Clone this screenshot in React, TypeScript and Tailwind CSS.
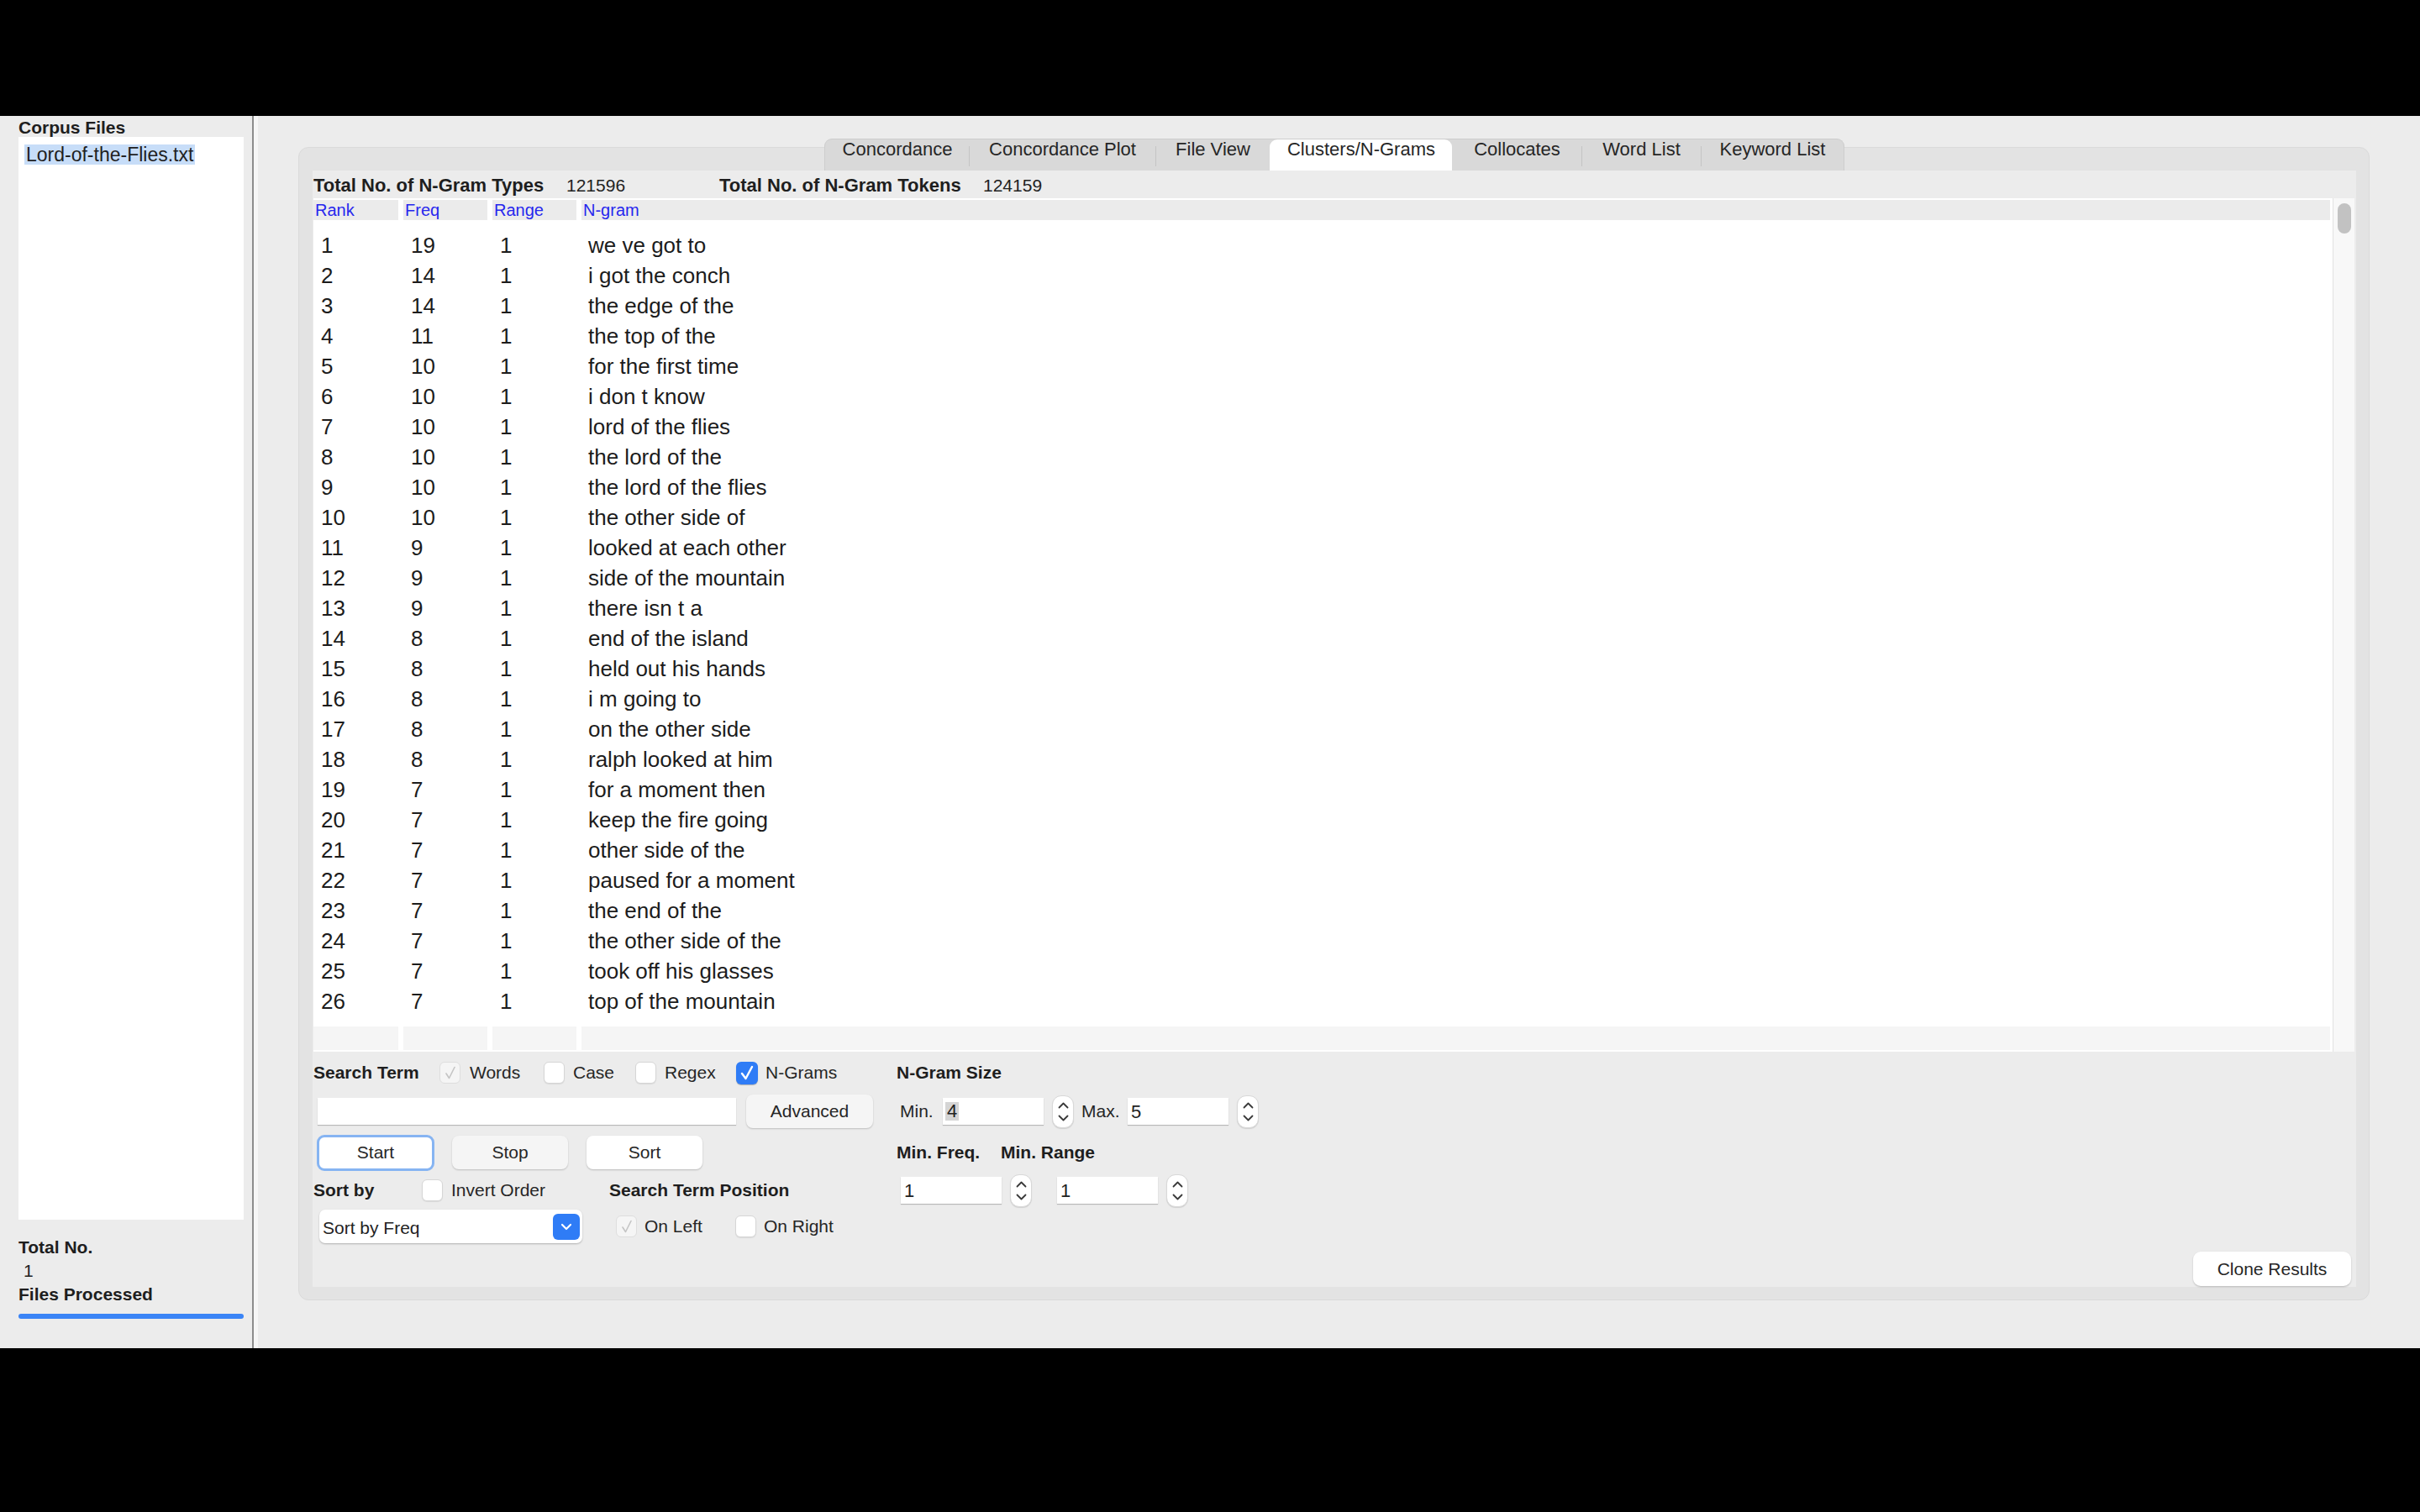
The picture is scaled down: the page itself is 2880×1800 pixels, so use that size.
import React from "react";

const rows: [number, number, number, string][] = [
  [1, 19, 1, "we ve got to"],
  [2, 14, 1, "i got the conch"],
  [3, 14, 1, "the edge of the"],
  [4, 11, 1, "the top of the"],
  [5, 10, 1, "for the first time"],
  [6, 10, 1, "i don t know"],
  [7, 10, 1, "lord of the flies"],
  [8, 10, 1, "the lord of the"],
  [9, 10, 1, "the lord of the flies"],
  [10, 10, 1, "the other side of"],
  [11, 9, 1, "looked at each other"],
  [12, 9, 1, "side of the mountain"],
  [13, 9, 1, "there isn t a"],
  [14, 8, 1, "end of the island"],
  [15, 8, 1, "held out his hands"],
  [16, 8, 1, "i m going to"],
  [17, 8, 1, "on the other side"],
  [18, 8, 1, "ralph looked at him"],
  [19, 7, 1, "for a moment then"],
  [20, 7, 1, "keep the fire going"],
  [21, 7, 1, "other side of the"],
  [22, 7, 1, "paused for a moment"],
  [23, 7, 1, "the end of the"],
  [24, 7, 1, "the other side of the"],
  [25, 7, 1, "took off his glasses"],
  [26, 7, 1, "top of the mountain"],
];

const tabs: [string, number][] = [
  ["Concordance", 171],
  ["Concordance Plot", 222],
  ["File View", 136],
  ["Clusters/N-Grams", 217],
  ["Collocates", 154],
  ["Word List", 142],
  ["Keyword List", 170],
];
const selectedTab = 3;

function Check({ state }: { state: "off" | "on" | "dim" }) {
  if (state === "on") {
    return (
      <span className="w-[26px] h-[27px] shrink-0 rounded-[6px] bg-[#2f7cf6] flex items-center justify-center shadow-[0_1px_1px_rgba(0,0,0,0.25)]">
        <svg width="18" height="20" viewBox="0 0 18 20">
          <path d="M3 11 L7.5 17 L15 3" fill="none" stroke="#fff" strokeWidth="2.4" strokeLinecap="round" strokeLinejoin="round" />
        </svg>
      </span>
    );
  }
  if (state === "dim") {
    return (
      <span className="w-[25px] h-[26px] shrink-0 rounded-[6px] bg-[#f5f5f5] border border-[#dedede] flex items-center justify-center">
        <svg width="16" height="18" viewBox="0 0 16 18">
          <path d="M3 10 L6.5 15.5 L13 2.5" fill="none" stroke="#c4c4c4" strokeWidth="1.6" strokeLinecap="round" strokeLinejoin="round" />
        </svg>
      </span>
    );
  }
  return <span className="w-[25px] h-[26px] shrink-0 rounded-[6px] bg-white border border-[#d6d6d6] shadow-[0_1px_1px_rgba(0,0,0,0.08)]" />;
}

function Spinner() {
  return (
    <span className="w-[26px] h-[39px] shrink-0 rounded-[11px] bg-white border border-[#d8d8d8] shadow-[0_1px_1px_rgba(0,0,0,0.12)] flex flex-col items-center justify-center gap-[7px]">
      <svg width="13" height="8" viewBox="0 0 13 8">
        <path d="M1.5 6.5 L6.5 1.5 L11.5 6.5" fill="none" stroke="#3a3a3a" strokeWidth="1.8" strokeLinecap="round" strokeLinejoin="round" />
      </svg>
      <svg width="13" height="8" viewBox="0 0 13 8">
        <path d="M1.5 1.5 L6.5 6.5 L11.5 1.5" fill="none" stroke="#3a3a3a" strokeWidth="1.8" strokeLinecap="round" strokeLinejoin="round" />
      </svg>
    </span>
  );
}

function NumField({ value, selected, className }: { value: string; selected?: boolean; className?: string }) {
  return (
    <span className={"w-[120px] h-[32px] shrink-0 bg-white shadow-[0_1px_1px_rgba(0,0,0,0.22)] flex items-center text-[22px] text-[#222] " + (className ?? "")}>
      {selected ? (
        <span className="ml-[3px] bg-[#d5d5d5] px-[2px] leading-[22px]">{value}</span>
      ) : (
        <span className="ml-[4px]">{value}</span>
      )}
    </span>
  );
}

export default function App() {
  return (
    <div className="w-[2880px] h-[1800px] bg-black flex flex-col font-['Liberation_Sans',Arial,sans-serif] text-[#222] overflow-hidden">
      <div className="h-[138px] shrink-0" />
      <div className="h-[1467px] shrink-0 flex bg-[#ececec]">
        {/* left: corpus files */}
        <aside className="w-[300px] shrink-0 flex flex-col pl-[22px] pr-[10px]">
          <div className="pt-[3px] leading-[22px] text-[21px] font-bold text-[#1e1e1e]">Corpus Files</div>
          <div className="h-[1289px] bg-white pt-[9px] pl-[7px]">
            <span className="inline-block bg-[#c7ddf8] h-[24px] leading-[24px] px-[2px] text-[23px] text-[#1f1f1f]">
              Lord-of-the-Flies.txt
            </span>
          </div>
          <div className="mt-[19px] leading-[28px] text-[21px] font-bold text-[#1e1e1e]">Total No.</div>
          <div className="leading-[28px] text-[21px] pl-[6px]">1</div>
          <div className="leading-[28px] text-[21px] font-bold text-[#1e1e1e]">Files Processed</div>
          <div className="mt-[9px] h-[6px] rounded-full bg-[#3a84f6]" />
        </aside>
        <div className="w-[2px] shrink-0 bg-[#8d8d8d]" />
        <div className="w-[5px] shrink-0 bg-[#f6f6f6]" />

        {/* main */}
        <main className="flex-1 pl-[48px] pr-[60px] pt-[37px] pb-[57px] flex flex-col">
          <section className="flex-1 bg-[#e3e3e3] border border-[#dadada] rounded-[12px] px-[16px] pr-[15px] pb-[15px] flex flex-col">
            <div className="-mt-[11px] h-[38px] shrink-0 flex justify-center">
              <div className="flex h-[38px] rounded-t-[9px] bg-[#d9d9d9] border border-b-0 border-[#cdcdcd] overflow-hidden">
                {tabs.map(([label, w], i) => {
                  const sel = i === selectedTab;
                  const sep = i > 0 && !sel && i - 1 !== selectedTab;
                  return (
                    <div key={label} className={"flex h-full " + (sel ? "bg-white rounded-t-[9px]" : "")} style={{ width: w }}>
                      <span className={"w-px h-[24px] mt-[8px] shrink-0 " + (sep ? "bg-[#c4c4c4]" : "bg-transparent")} />
                      <span className="flex-1 text-center text-[22px] leading-[24px] text-[#262626]">{label}</span>
                    </div>
                  );
                })}
              </div>
            </div>

            <div className="flex-1 bg-[#ececec] flex flex-col pl-px pr-[2px]">
              {/* stats */}
              <div className="h-[33px] shrink-0 pt-[7px] flex items-start text-[22px] leading-[22px]">
                <span className="w-[301px] font-bold text-[#1e1e1e]">Total No. of N-Gram Types</span>
                <span className="w-[182px] text-[21px]">121596</span>
                <span className="w-[314px] font-bold text-[#1e1e1e]">Total No. of N-Gram Tokens</span>
                <span className="text-[21px]">124159</span>
              </div>

              {/* table */}
              <div className="h-[1016px] shrink-0 flex">
                <div className="flex-1 bg-white py-[2px] flex flex-col">
                  <div className="h-[24px] shrink-0 flex gap-[6px] pr-[3px] text-[20px] leading-[24px] text-[#2727ee]">
                    <span className="w-[101px] bg-[#ebebeb] pl-[2px]">Rank</span>
                    <span className="w-[100px] bg-[#ebebeb] pl-[2px]">Freq</span>
                    <span className="w-[100px] bg-[#ebebeb] pl-[2px]">Range</span>
                    <span className="flex-1 bg-[#ebebeb] pl-[2px]">N-gram</span>
                  </div>
                  <div className="h-[960px] shrink-0 overflow-hidden pt-[12px] text-[26px] text-[#1c1c1c]">
                    {rows.map(([rank, freq, range, gram]) => (
                      <div key={rank} className="h-[36px] flex items-center">
                        <span className="w-[107px] pl-[9px]">{rank}</span>
                        <span className="w-[106px] pl-[9px]">{freq}</span>
                        <span className="w-[106px] pl-[9px]">{range}</span>
                        <span className="flex-1 pl-[8px]">{gram}</span>
                      </div>
                    ))}
                  </div>
                  <div className="h-[28px] shrink-0 flex gap-[6px] pr-[3px]">
                    <span className="w-[101px] bg-[#f5f5f5]" />
                    <span className="w-[100px] bg-[#f5f5f5]" />
                    <span className="w-[100px] bg-[#f5f5f5]" />
                    <span className="flex-1 bg-[#f5f5f5]" />
                  </div>
                </div>
                <div className="w-[26px] shrink-0 bg-[#f8f8f8] border-l border-[#e2e2e2] pt-[6px] flex justify-center">
                  <span className="w-[16px] h-[36px] rounded-full bg-[#c2c2c2]" />
                </div>
              </div>

              {/* controls */}
              <div className="flex-1 flex text-[21px] text-[#262626]">
                <div className="w-[694px] shrink-0 flex flex-col pt-[11px]">
                  <div className="h-[28px] flex items-center">
                    <span className="w-[150px] font-bold text-[#1e1e1e]">Search Term</span>
                    <span className="w-[124px] flex items-center"><Check state="dim" /><span className="ml-[11px]">Words</span></span>
                    <span className="w-[109px] flex items-center"><Check state="off" /><span className="ml-[10px]">Case</span></span>
                    <span className="w-[120px] flex items-center"><Check state="off" /><span className="ml-[10px]">Regex</span></span>
                    <span className="flex items-center"><Check state="on" /><span className="ml-[9px]">N-Grams</span></span>
                  </div>
                  <div className="mt-[11px] h-[42px] flex items-center">
                    <span className="ml-[5px] w-[498px] h-[32px] bg-white shadow-[0_1px_1px_rgba(0,0,0,0.22)]" />
                    <span className="ml-[12px] w-[151px] h-[40px] rounded-[8px] bg-[#f5f5f5] shadow-[0_1px_2px_rgba(0,0,0,0.2)] flex items-center justify-center">Advanced</span>
                  </div>
                  <div className="mt-[6px] h-[44px] flex items-center">
                    <span className="ml-[4px] w-[140px] h-[43px] rounded-[9px] bg-white border-[3px] border-[#86b4f2] flex items-center justify-center">Start</span>
                    <span className="ml-[21px] w-[138px] h-[40px] rounded-[8px] bg-[#f5f5f5] shadow-[0_1px_2px_rgba(0,0,0,0.2)] flex items-center justify-center">Stop</span>
                    <span className="ml-[22px] w-[138px] h-[40px] rounded-[8px] bg-white shadow-[0_1px_2px_rgba(0,0,0,0.22)] flex items-center justify-center">Sort</span>
                  </div>
                  <div className="mt-[2px] h-[42px] flex items-center">
                    <span className="w-[129px] font-bold text-[#1e1e1e]">Sort by</span>
                    <span className="w-[223px] flex items-center"><Check state="off" /><span className="ml-[10px]">Invert Order</span></span>
                    <span className="font-bold text-[#1e1e1e]">Search Term Position</span>
                  </div>
                  <div className="mt-[2px] h-[40px] flex items-center">
                    <span className="ml-[7px] w-[313px] h-[40px] rounded-[7px] bg-white shadow-[0_1px_2px_rgba(0,0,0,0.25)] flex items-center">
                      <span className="flex-1 pl-[4px] pt-[3px] text-[#222]">Sort by Freq</span>
                      <span className="mr-[3px] w-[32px] h-[31px] rounded-[6px] bg-[#2f7cf6] flex items-center justify-center">
                        <svg width="14" height="9" viewBox="0 0 14 9">
                          <path d="M2 2 L7 7 L12 2" fill="none" stroke="#fff" strokeWidth="2.2" strokeLinecap="round" strokeLinejoin="round" />
                        </svg>
                      </span>
                    </span>
                    <span className="ml-[40px] w-[142px] flex items-center"><Check state="dim" /><span className="ml-[9px]">On Left</span></span>
                    <span className="flex items-center"><Check state="off" /><span className="ml-[9px]">On Right</span></span>
                  </div>
                </div>

                <div className="flex flex-col pt-[11px]">
                  <div className="h-[28px] flex items-center font-bold text-[#1e1e1e]">N-Gram Size</div>
                  <div className="mt-[11px] h-[42px] flex items-center">
                    <span className="w-[55px] pl-[4px]">Min.</span>
                    <NumField value="4" selected />
                    <span className="ml-[10px]"><Spinner /></span>
                    <span className="ml-[9px] w-[55px]">Max.</span>
                    <NumField value="5" />
                    <span className="ml-[10px]"><Spinner /></span>
                  </div>
                  <div className="mt-[6px] h-[44px] flex items-center font-bold text-[#1e1e1e]">
                    <span className="w-[124px]">Min. Freq.</span>
                    <span>Min. Range</span>
                  </div>
                  <div className="mt-[2px] h-[42px] flex items-center">
                    <NumField value="1" className="ml-[5px]" />
                    <span className="ml-[10px]"><Spinner /></span>
                    <NumField value="1" className="ml-[30px]" />
                    <span className="ml-[10px]"><Spinner /></span>
                  </div>
                </div>

                <div className="flex-1" />
                <div className="flex flex-col justify-end pb-[1px] pr-[4px]">
                  <span className="w-[188px] h-[41px] rounded-[9px] bg-white shadow-[0_1px_2px_rgba(0,0,0,0.22)] flex items-center justify-center">
                    Clone Results
                  </span>
                </div>
              </div>
            </div>
          </section>
        </main>
      </div>
      <div className="flex-1" />
    </div>
  );
}
